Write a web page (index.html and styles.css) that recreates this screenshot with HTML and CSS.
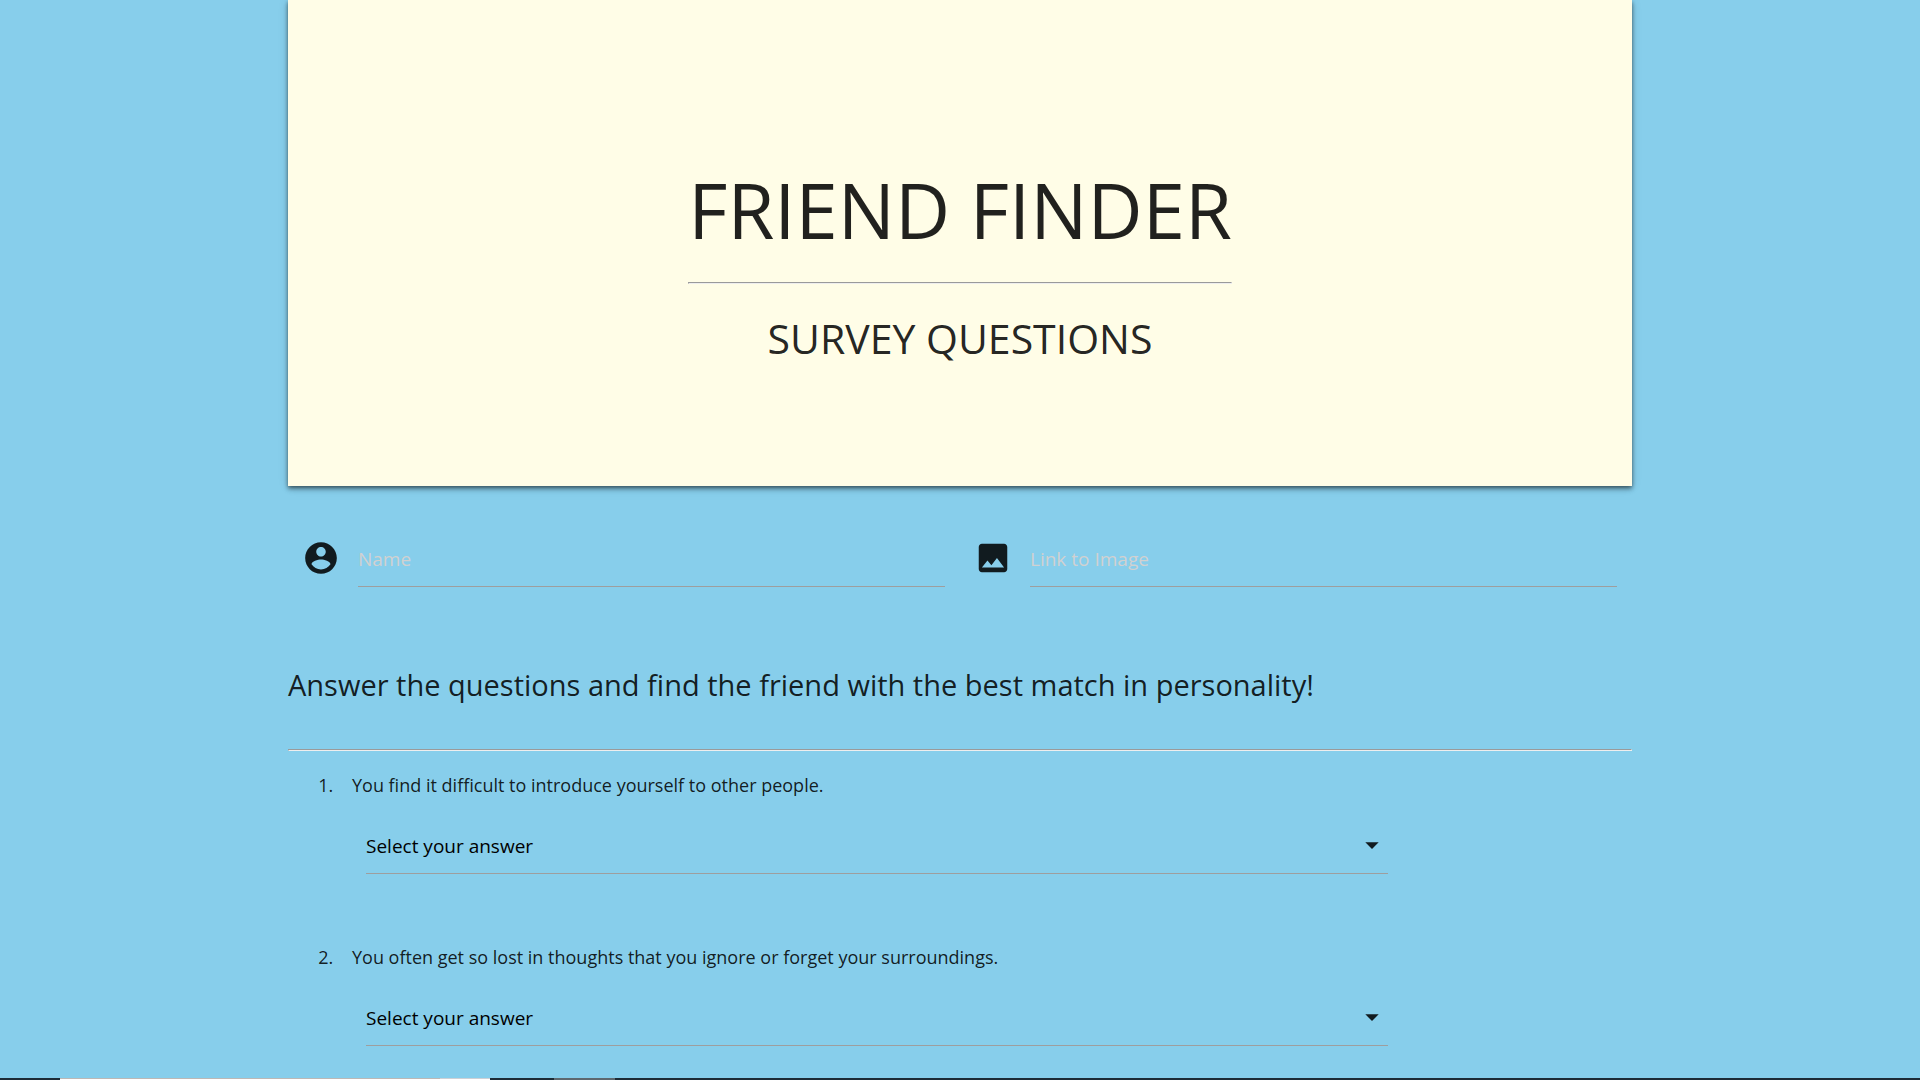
FILE: index.html
```html
<!DOCTYPE html>
<html lang="en">
<head>
<meta charset="utf-8">
<meta name="viewport" content="width=device-width, initial-scale=1">
<title>Friend Finder</title>
<link rel="stylesheet" href="styles.css">
</head>
<body>
<main class="container">
  <header class="hero">
    <div class="hero-inner">
      <h1 class="title">FRIEND FINDER</h1>
      <hr class="rule">
      <h2 class="subtitle">SURVEY QUESTIONS</h2>
    </div>
  </header>
  <form class="survey">
    <div class="fields">
      <div class="field">
        <svg class="icon" viewBox="0 0 24 24" aria-hidden="true"><path d="M12 2C6.480 2 2 6.480 2 12s4.480 10 10 10 10-4.480 10-10S17.520 2 12 2zm0 3c1.660 0 3 1.340 3 3s-1.340 3-3 3-3-1.340-3-3 1.340-3 3-3zm0 14.200c-2.500 0-4.710-1.280-6-3.220.030-1.990 4-3.080 6-3.080 1.990 0 5.970 1.090 6 3.080-1.290 1.940-3.500 3.220-6 3.220z"/></svg>
        <input class="text-input" type="text" placeholder="Name" aria-label="Name">
      </div>
      <div class="field">
        <svg class="icon" viewBox="0 0 24 24" aria-hidden="true"><path d="M21 19V5c0-1.100-.9-2-2-2H5c-1.100 0-2 .9-2 2v14c0 1.100.9 2 2 2h14c1.100 0 2-.9 2-2zM8.500 13.500l2.500 3.010L14.500 12l4.500 6H5l3.500-4.500z"/></svg>
        <input class="text-input" type="text" placeholder="Link to Image" aria-label="Link to Image">
      </div>
    </div>
    <h3 class="prompt">Answer the questions and find the friend with the best match in personality!</h3>
    <hr class="rule">
    <ol class="questions">
      <li class="question">
        <label class="question-text" for="q1">You find it difficult to introduce yourself to other people.</label>
        <div class="select-wrap">
          <select class="select" id="q1"><option>Select your answer</option></select>
          <svg class="caret" viewBox="0 0 24 24" aria-hidden="true"><path d="M7 10l5 5 5-5z"/></svg>
        </div>
      </li>
      <li class="question">
        <label class="question-text" for="q2">You often get so lost in thoughts that you ignore or forget your surroundings.</label>
        <div class="select-wrap">
          <select class="select" id="q2"><option>Select your answer</option></select>
          <svg class="caret" viewBox="0 0 24 24" aria-hidden="true"><path d="M7 10l5 5 5-5z"/></svg>
        </div>
      </li>
    </ol>
  </form>
</main>
<div class="taskbar" aria-hidden="true">
  <span class="task-search"></span>
  <span class="task-mic"></span>
  <span class="task-active"></span>
</div>
</body>
</html>
```
FILE: styles.css
```css
* { box-sizing: border-box; }

body {
  margin: 0;
  background: #87ceeb;
  color: rgba(0, 0, 0, 0.87);
  font-family: "Open Sans", "Noto Sans", sans-serif;
  font-size: 18px;
}

.container {
  width: 70%;
  margin: 0 auto;
}

.hero {
  display: flex;
  justify-content: center;
  padding: 158px 24px 118px;
  background: #fffde7;
  box-shadow: 0 4px 5px 0 rgba(0, 0, 0, 0.14), 0 1px 10px 0 rgba(0, 0, 0, 0.12), 0 2px 4px -1px rgba(0, 0, 0, 0.3), 0 2px 4px 0 rgba(0, 0, 0, 0.3);
}

.hero-inner { text-align: center; }

.title,
.subtitle,
.prompt {
  margin: 0;
  font-weight: 400;
}

.title {
  font-size: 76px;
  line-height: 104px;
  padding-bottom: 20px;
}

.subtitle {
  font-size: 41px;
  line-height: 60px;
  padding-top: 24px;
}

.rule {
  margin: 0;
  border: 1px solid;
  border-color: #9a9a9a #eee #eee #9a9a9a;
}

.fields {
  display: grid;
  grid-template-columns: 1fr 1fr;
  padding-top: 42px;
}

.field {
  display: flex;
  align-items: center;
  gap: 18px;
  padding: 0 15px 0 14px;
}

.icon {
  flex: none;
  width: 38px;
  height: 38px;
  fill: currentColor;
}

.text-input {
  flex: 1;
  min-width: 0;
  height: 59px;
  padding: 3px 0 0;
  border: 0;
  border-bottom: 1px solid #9e9e9e;
  background: transparent;
  color: inherit;
  font: inherit;
  font-size: 19px;
}

.text-input::placeholder { color: #d1d1d1; }

.prompt {
  padding: 74px 0 40px;
  font-size: 29px;
  line-height: 48px;
}

.questions {
  margin: 0;
  padding: 16px 0 0 50px;
}

.question {
  padding: 0 0 65px 14px;
  line-height: 36px;
}

.question:last-child { padding-bottom: 24px; }

.select-wrap {
  position: relative;
  width: calc(80% - 2px);
  margin: 16px 0 0 14px;
}

.select {
  display: block;
  width: 100%;
  height: 55px;
  padding: 0;
  border: 0;
  border-bottom: 1px solid #9e9e9e;
  border-radius: 0;
  appearance: none;
  background: transparent;
  color: #000;
  font: inherit;
  font-size: 19px;
}

.caret {
  position: absolute;
  top: 10px;
  right: 0;
  width: 32px;
  height: 32px;
  fill: currentColor;
  pointer-events: none;
}

.taskbar {
  position: fixed;
  right: 0;
  bottom: 0;
  left: 0;
  display: flex;
  height: 2px;
  background: #1d2b36;
}

.task-search,
.task-mic {
  border-top: 1px solid #bdb8b5;
  background: #fff;
}

.task-search {
  width: 380px;
  margin-left: 60px;
}

.task-mic {
  width: 50px;
  border-top-color: #cdd0d5;
}

.task-active {
  width: 61px;
  margin-left: 64px;
  background: #5d686f;
}
```
